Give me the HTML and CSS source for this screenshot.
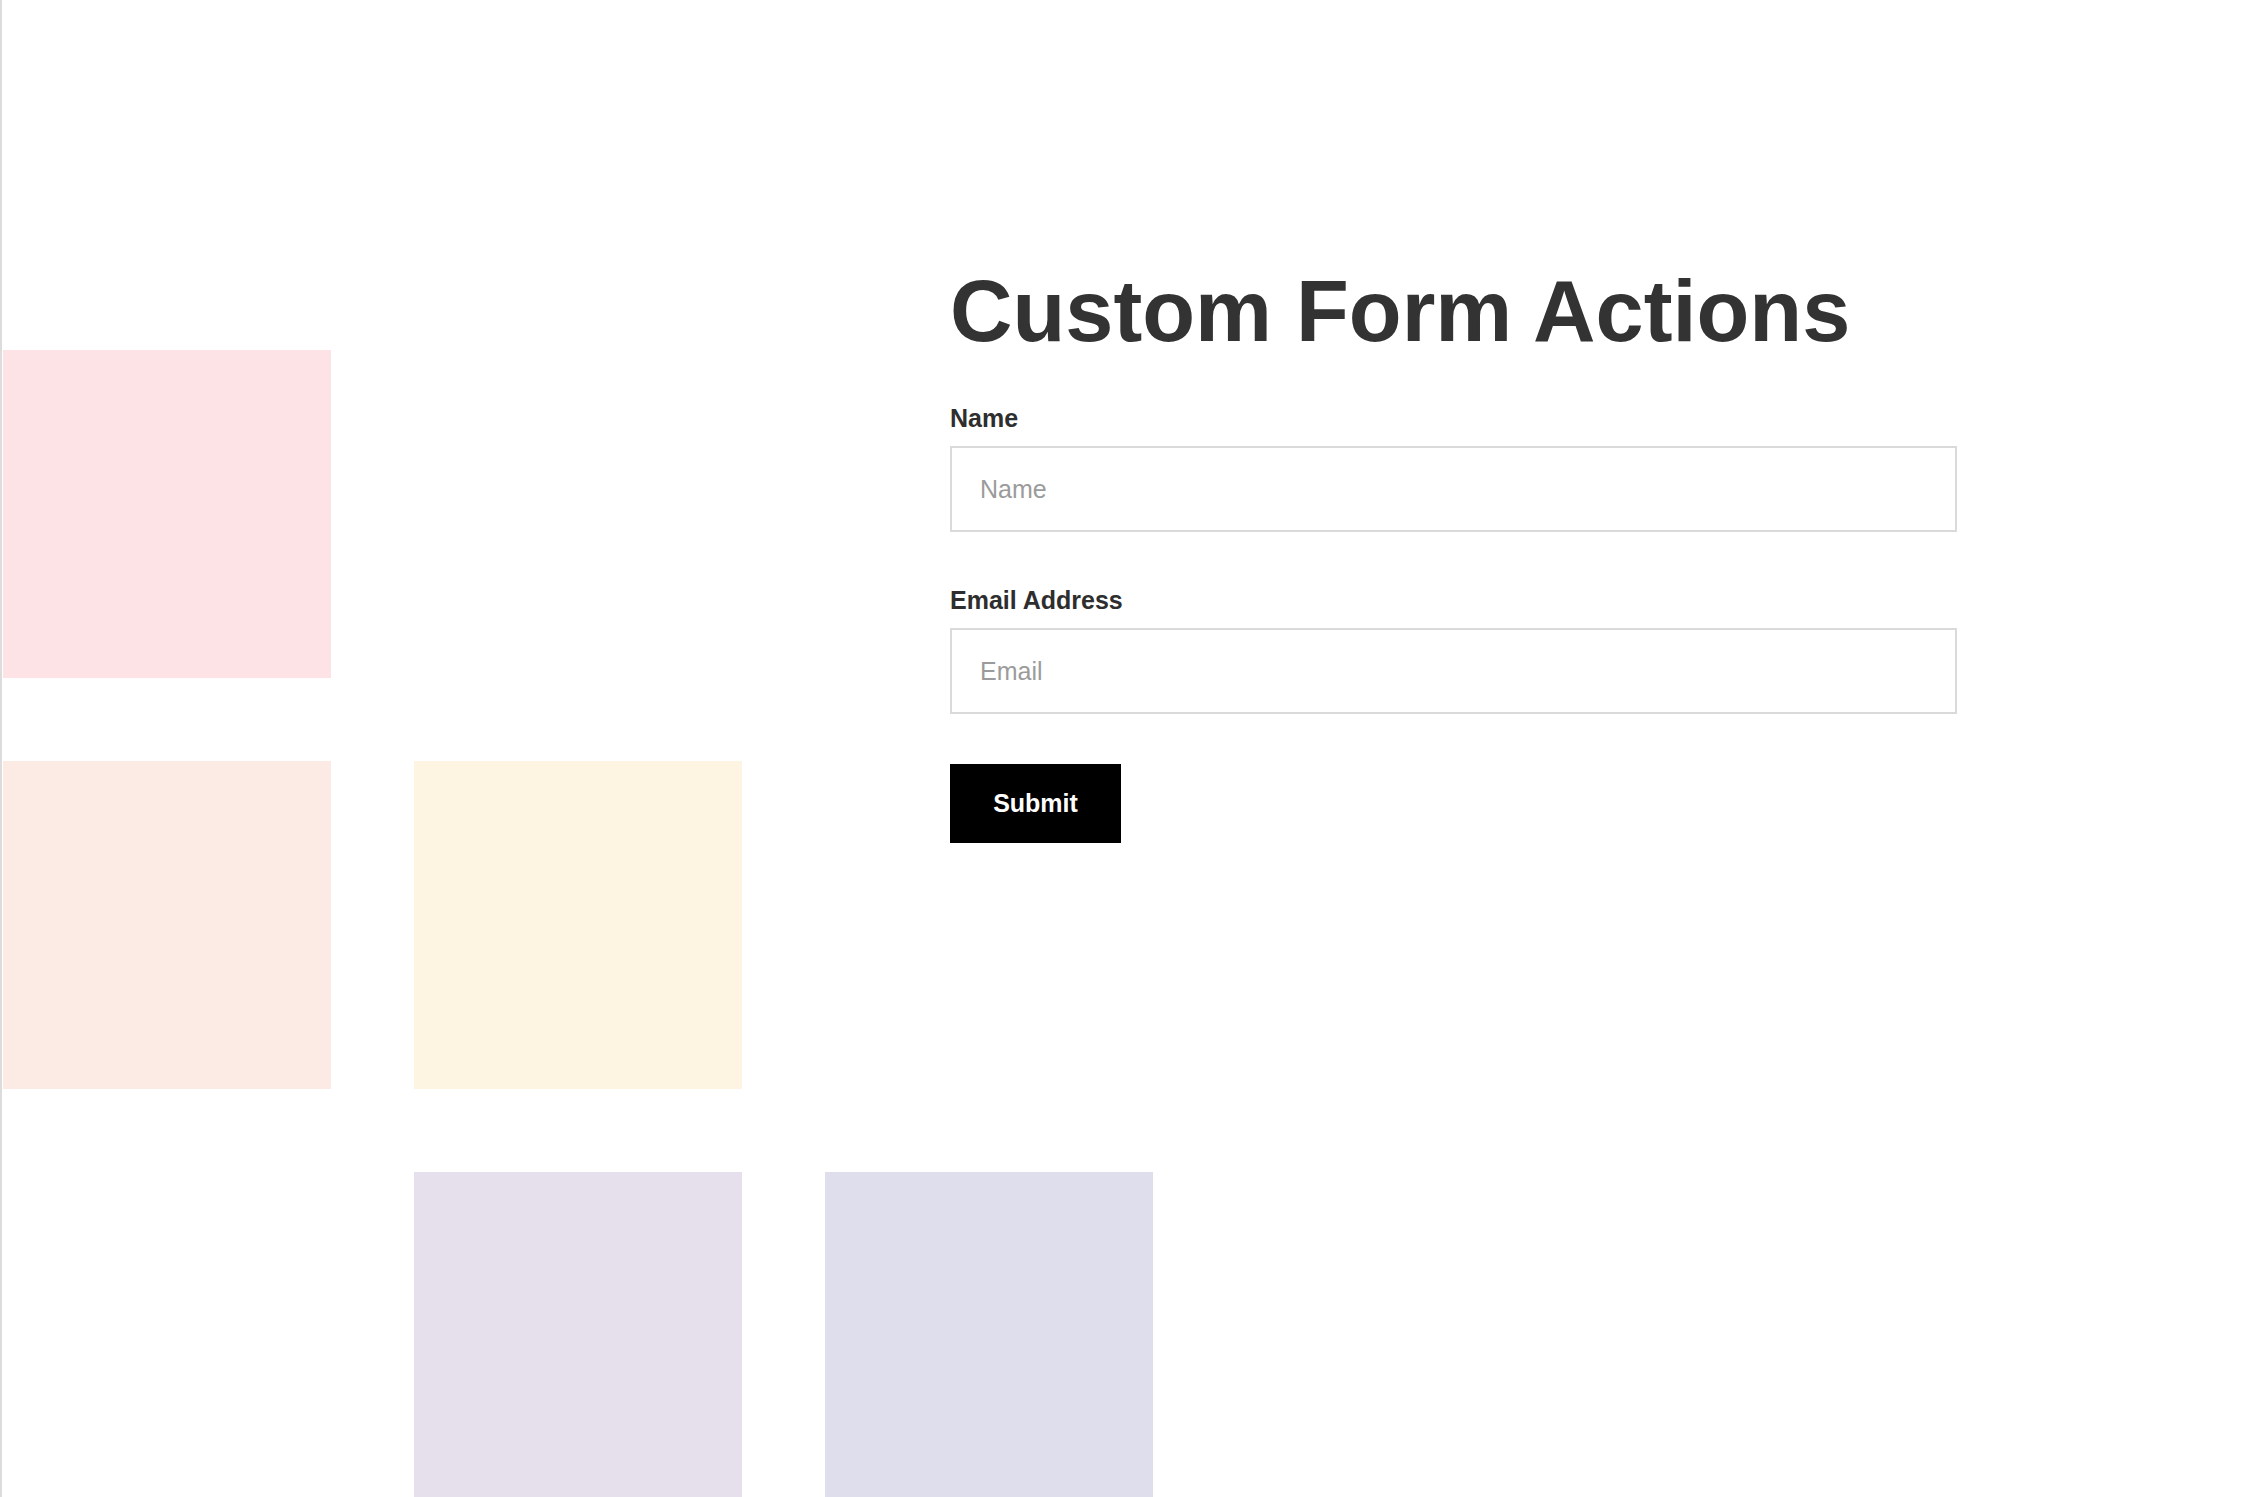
FILE: index.html
```html
<!DOCTYPE html>
<html lang="en">
<head>
<meta charset="utf-8">
<title>Custom Form Actions</title>
<link rel="stylesheet" href="styles.css">
</head>
<body>
<div class="page">
  <div class="tiles" aria-hidden="true">
    <div class="tile pink"></div>
    <div class="tile"></div>
    <div class="tile"></div>
    <div class="tile peach"></div>
    <div class="tile yellow"></div>
    <div class="tile"></div>
    <div class="tile"></div>
    <div class="tile lilac"></div>
    <div class="tile lavender"></div>
  </div>
  <main class="content">
    <h1 class="title">Custom Form Actions</h1>
    <form class="form">
      <div class="field">
        <label class="label" for="name">Name</label>
        <input class="input" id="name" type="text" placeholder="Name">
      </div>
      <div class="field">
        <label class="label" for="email">Email Address</label>
        <input class="input" id="email" type="email" placeholder="Email">
      </div>
      <button class="submit" type="button">Submit</button>
    </form>
  </main>
</div>
</body>
</html>
```

FILE: styles.css
```css
html, body {
  margin: 0;
  padding: 0;
  height: 100%;
  overflow: hidden;
  background: #fff;
}

body {
  font-family: "Liberation Sans", Arial, Helvetica, sans-serif;
  color: #333;
}

.page {
  display: grid;
  min-height: 100vh;
  border-left: 2px solid #dcdcdc;
}

.tiles {
  grid-area: 1 / 1;
  display: grid;
  grid-template-columns: repeat(3, 328px);
  grid-auto-rows: 328px;
  gap: 83px;
  padding: 350px 0 0 1px;
  align-content: start;
}

.tile.pink { background: #fee3e6; }
.tile.peach { background: #fceae4; }
.tile.yellow { background: #fdf5e1; }
.tile.lilac { background: #e6e0ec; }
.tile.lavender { background: #dfdeec; }

.content {
  grid-area: 1 / 1;
  justify-self: start;
  align-self: start;
  padding: 268px 0 0 948px;
  position: relative;
}

.title {
  margin: 0 0 52px;
  font-size: 86.5px;
  line-height: 86px;
  font-weight: 700;
  color: #333;
  white-space: nowrap;
}

.form {
  display: flex;
  flex-direction: column;
  width: 1007px;
}

.field {
  display: flex;
  flex-direction: column;
  margin-bottom: 56px;
}

.field:last-of-type {
  margin-bottom: 50px;
}

.label {
  font-size: 25px;
  line-height: 25px;
  font-weight: 700;
  color: #2e2e2e;
  margin-bottom: 15px;
}

.input {
  box-sizing: border-box;
  width: 100%;
  height: 86px;
  border: 2px solid #dadada;
  border-radius: 0;
  padding: 0 28px;
  font-family: "Liberation Sans", Arial, sans-serif;
  font-size: 25px;
  color: #333;
  background: #fff;
  outline: none;
}

.input::placeholder {
  color: #9b9b9b;
  opacity: 1;
}

.submit {
  align-self: flex-start;
  box-sizing: border-box;
  width: 171px;
  height: 79px;
  border: none;
  border-radius: 0;
  background: #000;
  color: #fff;
  font-family: "Liberation Sans", Arial, sans-serif;
  font-size: 25px;
  font-weight: 700;
  padding: 0;
  cursor: pointer;
}
```
